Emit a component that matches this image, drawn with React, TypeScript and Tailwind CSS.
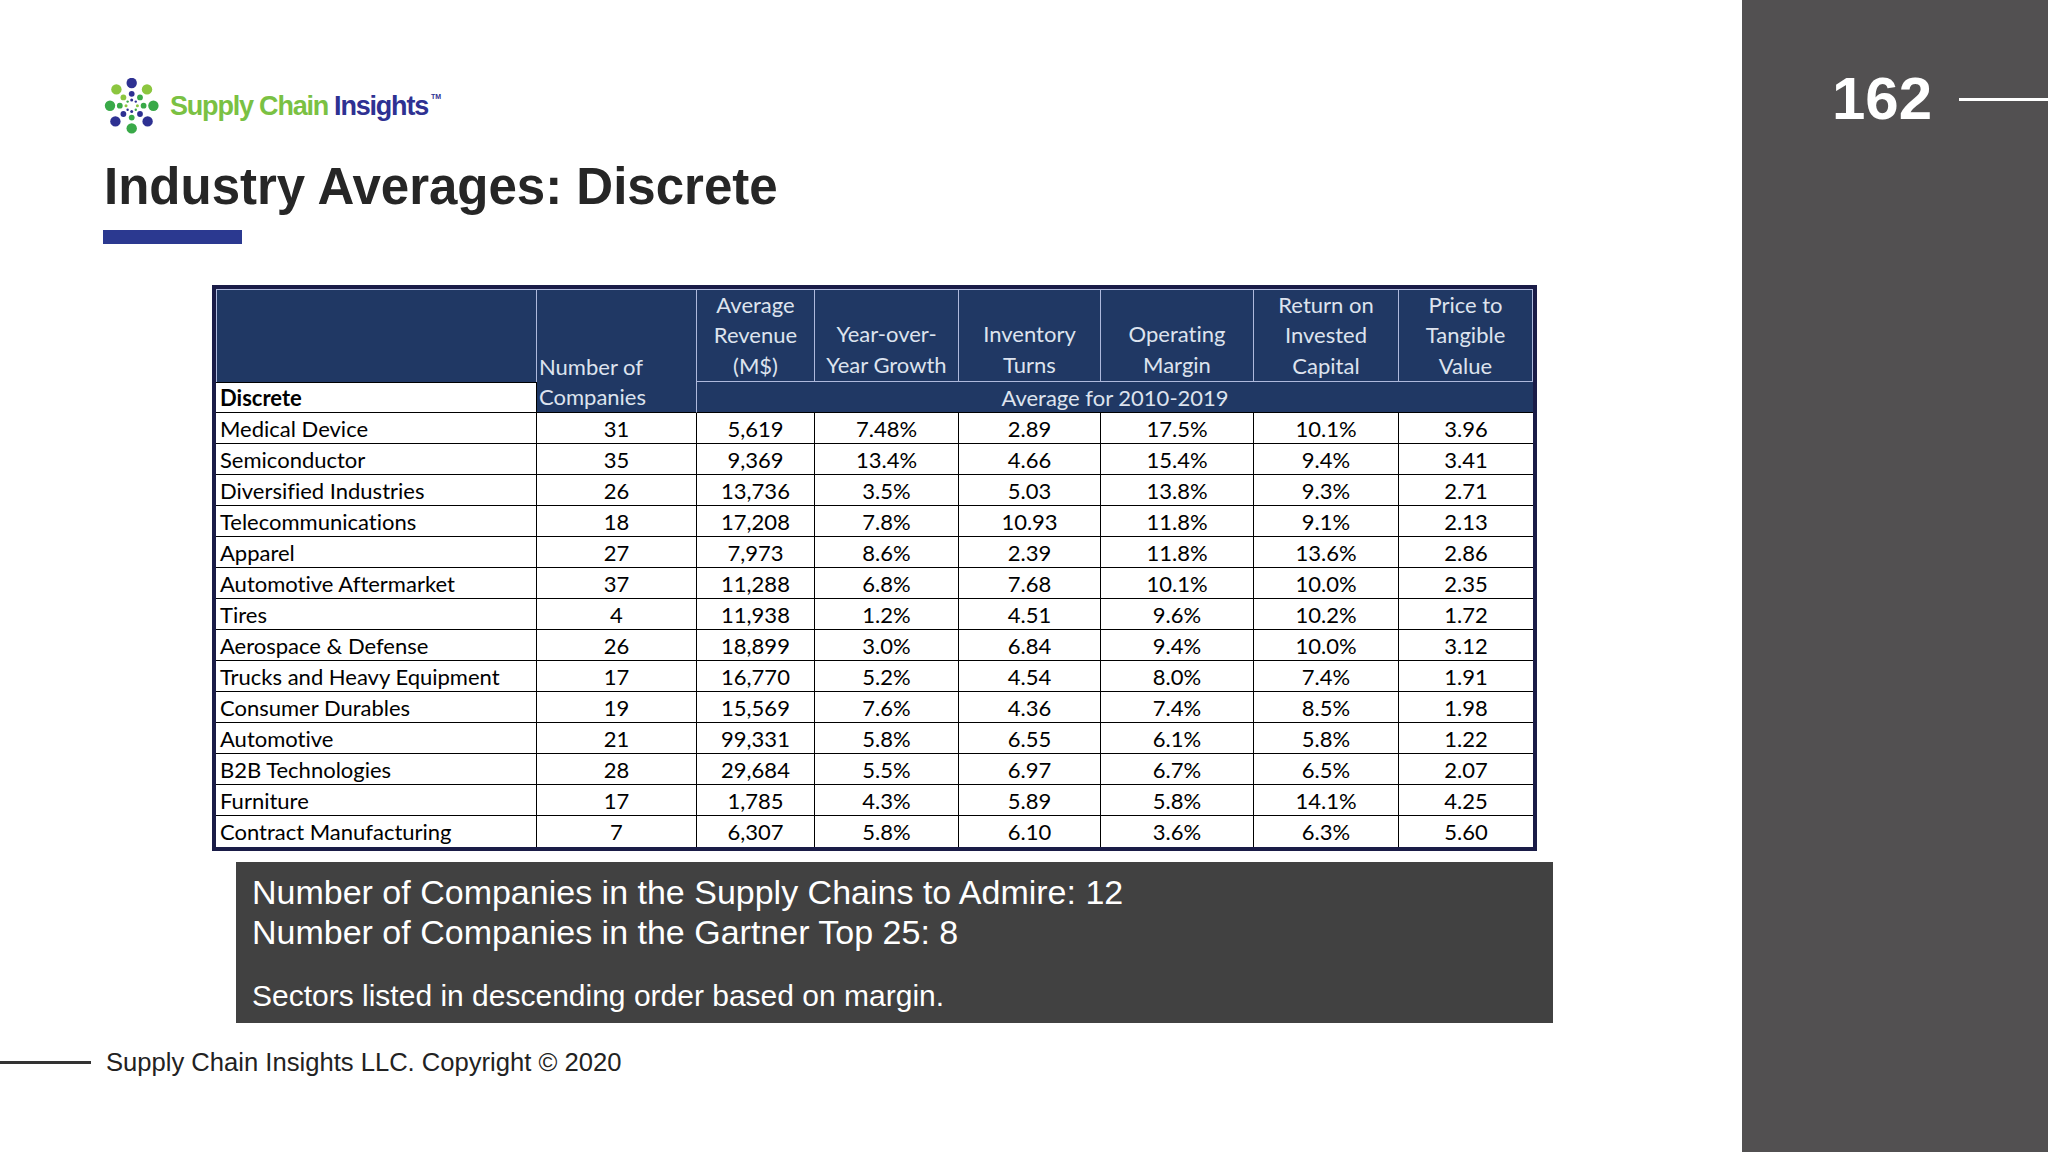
import React from "react";

const rows: string[][] = [
  ["Medical Device", "31", "5,619", "7.48%", "2.89", "17.5%", "10.1%", "3.96"],
  ["Semiconductor", "35", "9,369", "13.4%", "4.66", "15.4%", "9.4%", "3.41"],
  ["Diversified Industries", "26", "13,736", "3.5%", "5.03", "13.8%", "9.3%", "2.71"],
  ["Telecommunications", "18", "17,208", "7.8%", "10.93", "11.8%", "9.1%", "2.13"],
  ["Apparel", "27", "7,973", "8.6%", "2.39", "11.8%", "13.6%", "2.86"],
  ["Automotive Aftermarket", "37", "11,288", "6.8%", "7.68", "10.1%", "10.0%", "2.35"],
  ["Tires", "4", "11,938", "1.2%", "4.51", "9.6%", "10.2%", "1.72"],
  ["Aerospace & Defense", "26", "18,899", "3.0%", "6.84", "9.4%", "10.0%", "3.12"],
  ["Trucks and Heavy Equipment", "17", "16,770", "5.2%", "4.54", "8.0%", "7.4%", "1.91"],
  ["Consumer Durables", "19", "15,569", "7.6%", "4.36", "7.4%", "8.5%", "1.98"],
  ["Automotive", "21", "99,331", "5.8%", "6.55", "6.1%", "5.8%", "1.22"],
  ["B2B Technologies", "28", "29,684", "5.5%", "6.97", "6.7%", "6.5%", "2.07"],
  ["Furniture", "17", "1,785", "4.3%", "5.89", "5.8%", "14.1%", "4.25"],
  ["Contract Manufacturing", "7", "6,307", "5.8%", "6.10", "3.6%", "6.3%", "5.60"],
];

const headers: string[][] = [
  ["Average", "Revenue", "(M$)"],
  ["Year-over-", "Year Growth"],
  ["Inventory", "Turns"],
  ["Operating", "Margin"],
  ["Return on", "Invested", "Capital"],
  ["Price to", "Tangible", "Value"],
];

function Logo() {
  const navy = "#2e3192";
  const green = "#39a948";
  const lime = "#8cc63f";
  const dots: [number, number, number, string][] = [
    [27.7, 5, 5.2, navy],
    [12.4, 11.4, 5.2, lime],
    [43, 11.4, 5.2, lime],
    [6, 27.7, 5.2, green],
    [49.4, 27.7, 5.2, green],
    [11.4, 43.4, 5.2, navy],
    [43.6, 43.4, 5.2, navy],
    [27.7, 50.4, 5.2, green],
    [27.7, 15.8, 2.9, navy],
    [19.4, 19.4, 2.9, lime],
    [36, 19.4, 2.9, green],
    [15.8, 27.7, 2.9, green],
    [39.6, 27.7, 2.9, green],
    [19.4, 36, 2.9, navy],
    [36, 36, 2.9, navy],
    [27.7, 39.6, 2.9, green],
    [27.7, 22, 1.5, navy],
    [22, 27.7, 1.5, lime],
    [33.4, 27.7, 1.5, lime],
    [27.7, 33.4, 1.5, navy],
    [23.6, 23.6, 1.2, green],
    [31.8, 23.6, 1.2, navy],
    [23.6, 31.8, 1.2, navy],
    [31.8, 31.8, 1.2, green],
  ];
  return (
    <svg width="57" height="57" viewBox="0 0 57 57">
      {dots.map(([x, y, r, c], i) => (
        <circle key={i} cx={x} cy={y} r={r} fill={c} />
      ))}
    </svg>
  );
}

export default function App() {
  const arial = { fontFamily: '"Liberation Sans", Arial, sans-serif' };
  const lato = { fontFamily: 'Lato, "Open Sans", sans-serif' };
  const light = "border-[#aeb9dc]";
  return (
    <div className="w-[2048px] h-[1152px] flex bg-white overflow-hidden" style={arial}>
      <div className="w-[1742px] flex flex-col">
        <div className="mt-[78px] ml-[104px] h-[57px] flex items-center">
          <Logo />
          <div className="ml-[9px] text-[27px] font-bold tracking-[-1.2px] leading-none flex items-start">
            <span className="text-[#7ac143]">Supply Chain</span>
            <span className="ml-[6px] text-[#2e3192]">Insights</span>
            <span className="ml-[3px] text-[7px] text-[#2e3192] tracking-normal">TM</span>
          </div>
        </div>
        <div className="mt-[26px] ml-[104px] text-[51px] leading-[51px] font-bold text-[#262626]">
          Industry Averages: Discrete
        </div>
        <div className="mt-[18px] ml-[103px] w-[139px] h-[14px] bg-[#2b3990]" />

        <div
          className="mt-[41px] ml-[212px] w-[1325px] border-[4px] border-[#1a1c47] [font-variant-ligatures:none]"
          style={lato}
        >
          <div className="grid grid-cols-[321px_160px_118px_144px_142px_153px_145px_134px] grid-rows-[repeat(18,31px)] text-[22px] text-black">
            <div className={`col-start-1 row-start-1 row-span-3 bg-[#203864] border-t border-l border-r ${light}`} />
            <div className={`col-start-2 row-start-1 row-span-4 bg-[#203864] border-t border-r ${light} border-b-[#000] border-b flex flex-col justify-end text-[#dde3ee] pl-[2px]`}>
              <div className="h-[31px] leading-[31px]">Number of</div>
              <div className="h-[30px] leading-[30px]">Companies</div>
            </div>
            {headers.map((h, i) => (
              <div
                key={i}
                className={`row-start-1 row-span-3 bg-[#203864] border-t border-r border-b ${light} flex flex-col justify-end items-center text-[#dde3ee]`}
                style={{ gridColumnStart: i + 3 }}
              >
                {h.map((t, j) => (
                  <div key={j} className="h-[31px] leading-[30px] whitespace-nowrap">
                    {t}
                  </div>
                ))}
              </div>
            ))}
            <div className="col-start-1 row-start-4 bg-white border-t border-r border-b border-black font-bold flex items-center pl-[4px]">
              Discrete
            </div>
            <div className="col-start-3 col-span-6 row-start-4 bg-[#203864] border-b border-black flex items-center justify-center text-[#dde3ee]">
              Average for 2010-2019
            </div>
            {rows.map((r, ri) =>
              r.map((c, ci) => (
                <div
                  key={`${ri}-${ci}`}
                  className={`bg-white border-black flex items-center ${ri < rows.length - 1 ? "border-b" : ""} ${ci < 7 ? "border-r" : ""} ${ci === 0 ? "pl-[4px] justify-start" : "justify-center"}`}
                >
                  {c}
                </div>
              ))
            )}
          </div>
        </div>

        <div className="mt-[11px] ml-[236px] w-[1317px] h-[161px] bg-[#414141] text-white pl-[16px] pt-[10px]">
          <div className="text-[34px] leading-[40px]">Number of Companies in the Supply Chains to Admire: 12</div>
          <div className="text-[34px] leading-[40px]">Number of Companies in the Gartner Top 25: 8</div>
          <div className="mt-[24px] text-[30px] leading-[40px]">Sectors listed in descending order based on margin.</div>
        </div>

        <div className="mt-[23px] h-[32px] flex items-center">
          <div className="w-[91px] h-[3px] bg-[#333333]" />
          <div className="ml-[15px] text-[25.6px] leading-[32px] text-[#222222]">
            Supply Chain Insights LLC. Copyright © 2020
          </div>
        </div>
      </div>

      <div className="w-[306px] bg-[#525051] pt-[69px]">
        <div className="flex items-center">
          <div className="ml-[90px] text-[60px] leading-[60px] font-bold text-white">162</div>
          <div className="ml-[27px] flex-1 h-[3px] bg-white" />
        </div>
      </div>
    </div>
  );
}
